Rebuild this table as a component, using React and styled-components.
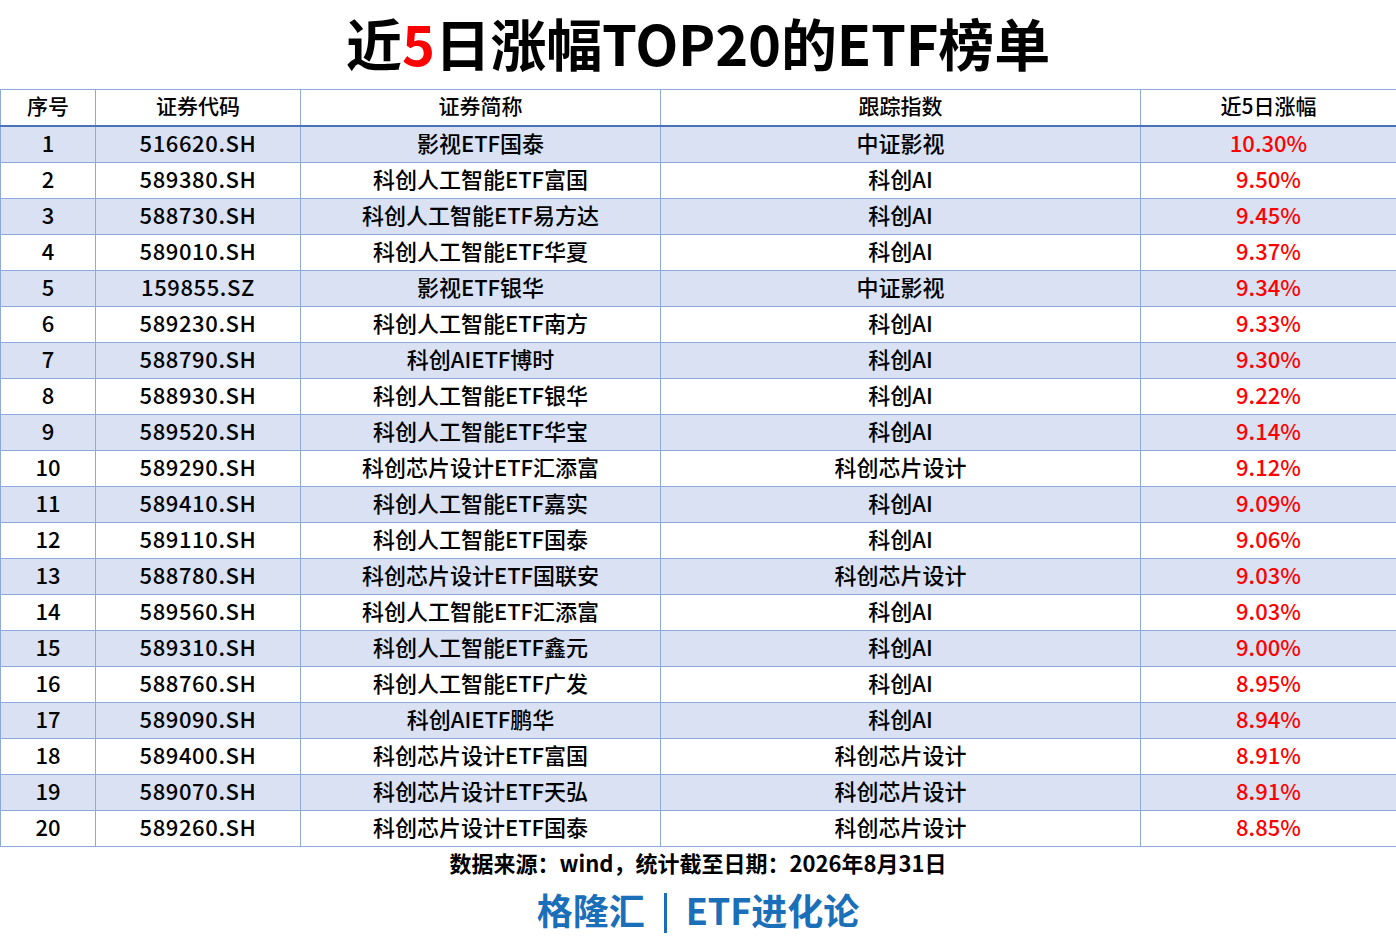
import React from "react";
import styled, { createGlobalStyle } from "styled-components";

const GlobalStyle = createGlobalStyle`
  html, body {
    margin: 0;
    padding: 0;
    background: #ffffff;
  }
  body {
    font-family: "Noto Sans CJK SC", "Noto Sans", sans-serif;
    color: #000;
  }
`;

const Page = styled.div`
  width: 1396px;
  height: 941px;
  display: flex;
  flex-direction: column;
  background: #fff;
`;

const Title = styled.h1`
  margin: 0;
  height: 89px;
  flex-shrink: 0;
  box-sizing: border-box;
  padding-bottom: 6px;
  display: flex;
  align-items: center;
  justify-content: center;
  font-size: 56px;
  font-weight: 700;
  letter-spacing: -0.2px;
  color: #000;
  .hl {
    color: #ff0000;
  }
`;

const Table = styled.table`
  width: 1396px;
  flex-shrink: 0;
  border-collapse: collapse;
  table-layout: fixed;
`;

const HeadCell = styled.th`
  height: 31px;
  padding: 0 0 4px;
  font-size: 21px;
  font-weight: 500;
  text-align: center;
  border: 1px solid #8eaadb;
  border-bottom: 2px solid #4a72b8;
  line-height: 1;
`;

const Row = styled.tr`
  background: ${(p) => (p.$shade ? "#d9e1f2" : "#ffffff")};
`;

const Cell = styled.td`
  height: 29px;
  padding: 0 0 6px;
  font-size: 22px;
  font-weight: 500;
  text-align: center;
  border: 1px solid #8eaadb;
  line-height: 1;
  color: ${(p) => (p.$red ? "#ff0000" : "#000")};
  letter-spacing: ${(p) => (p.$code ? "0.6px" : "0")};
`;

const Source = styled.div`
  height: 36px;
  flex-shrink: 0;
  box-sizing: border-box;
  padding-bottom: 6px;
  display: flex;
  align-items: center;
  justify-content: center;
  font-size: 22px;
  font-weight: 700;
  letter-spacing: 0;
`;

const Brand = styled.div`
  flex: 1;
  display: flex;
  align-items: center;
  justify-content: center;
  gap: 19px;
  color: #1a6fb8;
  font-size: 36px;
  font-weight: 700;
  padding-bottom: 8px;
`;

const Divider = styled.span`
  width: 3px;
  height: 40px;
  background: #1a6fb8;
  margin-top: 8px;
`;

const widths = [95, 205, 360, 480, 256];
const headers = ["序号", "证券代码", "证券简称", "跟踪指数", "近5日涨幅"];

const rows = [
  ["516620.SH", "影视ETF国泰", "中证影视", "10.30%"],
  ["589380.SH", "科创人工智能ETF富国", "科创AI", "9.50%"],
  ["588730.SH", "科创人工智能ETF易方达", "科创AI", "9.45%"],
  ["589010.SH", "科创人工智能ETF华夏", "科创AI", "9.37%"],
  ["159855.SZ", "影视ETF银华", "中证影视", "9.34%"],
  ["589230.SH", "科创人工智能ETF南方", "科创AI", "9.33%"],
  ["588790.SH", "科创AIETF博时", "科创AI", "9.30%"],
  ["588930.SH", "科创人工智能ETF银华", "科创AI", "9.22%"],
  ["589520.SH", "科创人工智能ETF华宝", "科创AI", "9.14%"],
  ["589290.SH", "科创芯片设计ETF汇添富", "科创芯片设计", "9.12%"],
  ["589410.SH", "科创人工智能ETF嘉实", "科创AI", "9.09%"],
  ["589110.SH", "科创人工智能ETF国泰", "科创AI", "9.06%"],
  ["588780.SH", "科创芯片设计ETF国联安", "科创芯片设计", "9.03%"],
  ["589560.SH", "科创人工智能ETF汇添富", "科创AI", "9.03%"],
  ["589310.SH", "科创人工智能ETF鑫元", "科创AI", "9.00%"],
  ["588760.SH", "科创人工智能ETF广发", "科创AI", "8.95%"],
  ["589090.SH", "科创AIETF鹏华", "科创AI", "8.94%"],
  ["589400.SH", "科创芯片设计ETF富国", "科创芯片设计", "8.91%"],
  ["589070.SH", "科创芯片设计ETF天弘", "科创芯片设计", "8.91%"],
  ["589260.SH", "科创芯片设计ETF国泰", "科创芯片设计", "8.85%"],
];

const App = () => {
  return (
    <Page>
      <GlobalStyle />
      <Title>
        近<span className="hl">5</span>日涨幅TOP20的ETF榜单
      </Title>
      <Table>
        <colgroup>
          {widths.map((w, i) => (
            <col key={i} style={{ width: w }} />
          ))}
        </colgroup>
        <thead>
          <tr>
            {headers.map((h) => (
              <HeadCell key={h}>{h}</HeadCell>
            ))}
          </tr>
        </thead>
        <tbody>
          {rows.map((r, i) => (
            <Row key={r[0]} $shade={i % 2 === 0}>
              <Cell>{i + 1}</Cell>
              <Cell $code>{r[0]}</Cell>
              <Cell>{r[1]}</Cell>
              <Cell>{r[2]}</Cell>
              <Cell $red>{r[3]}</Cell>
            </Row>
          ))}
        </tbody>
      </Table>
      <Source>数据来源：wind，统计截至日期：2026年8月31日</Source>
      <Brand>
        <span>格隆汇</span>
        <Divider />
        <span>ETF进化论</span>
      </Brand>
    </Page>
  );
};

export default App;
